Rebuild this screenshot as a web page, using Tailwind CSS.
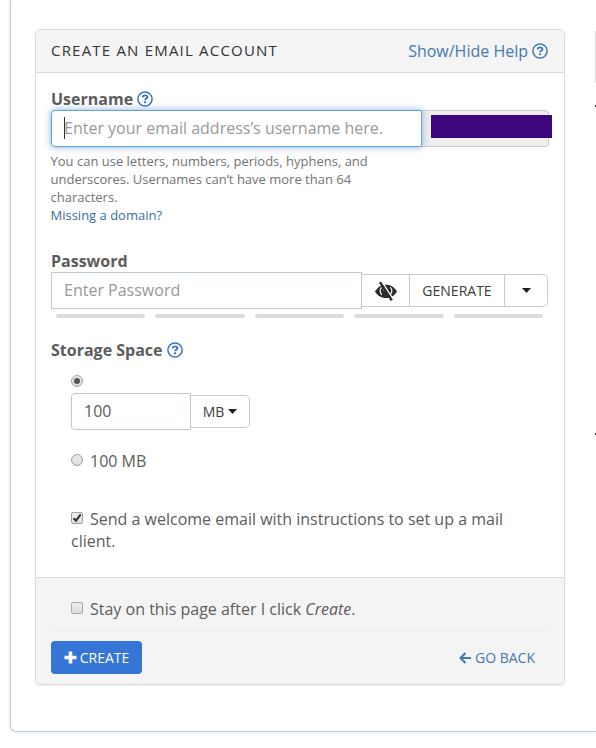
<!DOCTYPE html>
<html lang="en">
<head>
<meta charset="utf-8">
<title>Create an Email Account</title>
<script src="https://cdn.jsdelivr.net/npm/@tailwindcss/browser@4"></script>
</head>
<body class="relative h-[748px] overflow-hidden bg-white font-['Open_Sans',sans-serif] text-[16px] leading-[22px] text-[#5c5c5c]">
<svg class="hidden">
  <symbol id="help" viewBox="0 0 16 16"><circle cx="8" cy="8" r="7.1" fill="none" stroke="currentColor" stroke-width="1.5"/><path d="M5.600 6.300C5.800 4.900 6.800 4.400 8 4.400c1.300 0 2.400.7 2.400 1.900 0 1.500-2.300 1.500-2.300 2.900" fill="none" stroke="currentColor" stroke-width="1.900"/><rect x="7.100" y="10.300" width="2" height="1.900" fill="currentColor"/></symbol>
</svg>
<main class="ml-[10px] h-[732px] rounded-bl-[6px] border border-t-0 border-r-0 border-[#bcc8d6] pt-[29px] pl-[24px] shadow-[0_0_5px_#dfeaf5]">
  <section class="w-[530px] h-[656px] flex flex-col overflow-hidden rounded-[4px] border border-[#dadada] shadow-[0_1px_1px_rgba(0,0,0,.05)]">
    <header class="flex h-[43px] shrink-0 items-center justify-between border-b border-[#dadada] bg-[#f4f4f4] px-[15px]">
      <h1 class="whitespace-nowrap pb-[2px] text-[15px] tracking-[1.2px] text-[#333]">CREATE AN EMAIL ACCOUNT</h1>
      <a class="flex items-center gap-[4px] whitespace-nowrap text-[#4479b3]">Show/Hide Help <svg class="mr-[1px] size-4"><use href="#help"/></svg></a>
    </header>
    <div class="h-[504px] shrink-0 px-[15px] pt-[15px]">
      <label class="flex h-[22px] items-center gap-[4px] font-bold">Username <svg class="size-4 text-[#3b6fc9]"><use href="#help"/></svg></label>
      <div class="relative flex h-[37px] w-[498px]">
        <div class="relative z-10 flex w-[371px] shrink-0 items-center rounded-l-[4px] border border-[#66a3d8] bg-white pl-[12px] text-[#999] shadow-[0_0_7px_rgba(70,130,200,.65)]"><span class="mt-[-1px] h-[22px] w-px bg-[#333]"></span><span class="mt-[-2px] ml-[-1px] whitespace-nowrap">Enter your email address’s username here.</span></div>
        <div class="flex-1 rounded-r-[4px] border border-l-0 border-[#ccc] bg-[#eee]"></div>
        <div class="absolute top-[5px] left-[380px] z-20 h-[23px] w-[121px] bg-[#3d067c]"></div>
      </div>
      <p class="mt-[5px] ml-[-0.5px] text-[13px] leading-[18px] whitespace-nowrap text-[#737373]">You can use letters, numbers, periods, hyphens, and<br>underscores. Usernames can’t have more than 64<br>characters.<br><a class="text-[#3a6ea5]">Missing a domain?</a></p>
      <label class="mt-[26px] block h-[22px] font-bold">Password</label>
      <div class="flex h-[37px] items-center">
        <div class="flex h-[37px] w-[311px] items-center border border-[#bcc8d6] pl-[12px] text-[#999]"><span class="mt-[-2px]">Enter Password</span></div>
        <div class="flex h-[33px] w-[186px] rounded-r-[5px] border border-l-0 border-[#c8ccd0] text-[14px] text-[#3c3c3c]">
          <div class="flex w-[48px] items-center justify-center border-r border-[#c8ccd0]">
            <svg class="h-5 w-6" viewBox="0 0 24 20"><path d="M1 10.500C3.500 6.300 7.200 3.700 12 3.700s8.500 2.600 11 6.800C20.500 14.700 16.800 17 12 17S3.500 14.700 1 10.500z" fill="#2b2b2b"/><path d="M7.600 6.300a5.200 5.200 0 0 0 .2 7.400M16.400 6.300a5.200 5.200 0 0 1-.2 7.400" fill="none" stroke="#fff" stroke-width="1.200"/><path d="M9.800 9.500c0-1.400.9-2.200 2.200-2.200" fill="none" stroke="#fff" stroke-width="1"/><path d="M7.900 0.800 19.300 18.500" stroke="#fff" stroke-width="1.500"/><path d="M6 1.200 17.800 19.400" stroke="#2b2b2b" stroke-width="2.400"/></svg>
          </div>
          <div class="flex w-[95px] items-center justify-center border-r border-[#c8ccd0]">GENERATE</div>
          <div class="flex flex-1 items-center justify-center"><svg class="h-[5px] w-[9px]" viewBox="0 0 9 5"><path d="M0 0h9L4.500 5z" fill="#222"/></svg></div>
        </div>
      </div>
      <div class="mt-[5px] grid w-[497px] grid-cols-5 gap-[10px] px-[5px]">
        <i class="h-1 rounded-full bg-[#dcdcdc]"></i><i class="h-1 rounded-full bg-[#dcdcdc]"></i><i class="h-1 rounded-full bg-[#dcdcdc]"></i><i class="h-1 rounded-full bg-[#dcdcdc]"></i><i class="h-1 rounded-full bg-[#dcdcdc]"></i>
      </div>
      <label class="mt-[21px] flex h-[22px] items-center gap-[4px] font-bold">Storage Space <svg class="size-4 text-[#3b6fc9]"><use href="#help"/></svg></label>
      <div class="pl-[20px]">
        <div class="mt-[14px] flex size-3 items-center justify-center rounded-full border border-[#a0a0a0] bg-linear-to-b from-[#e8e8e8] to-[#ddd]"><i class="size-[6px] rounded-full bg-[#555]"></i></div>
        <div class="mt-[6px] flex h-[37px] items-center">
          <div class="flex h-[37px] w-[120px] items-center rounded-l-[4px] border border-[#bcc8d6] pl-[12px]"><span class="mt-[-1px]">100</span></div>
          <div class="flex h-[33px] w-[59px] items-center justify-center gap-[4px] rounded-r-[5px] border border-l-0 border-[#c8ccd0] text-[14px] text-[#3c3c3c]">MB <svg class="h-[5px] w-[9px]" viewBox="0 0 9 5"><path d="M0 0h9L4.500 5z" fill="#222"/></svg></div>
        </div>
        <div class="mt-[20px] flex h-[22px] items-center gap-[7px]"><i class="mt-[-2px] size-3 rounded-full border border-[#a0a0a0] bg-linear-to-b from-[#e8e8e8] to-[#ddd]"></i>100 MB</div>
        <div class="mt-[36px] whitespace-nowrap"><div class="flex items-center gap-[7px]"><i class="mt-[-2px] block size-3 rounded-[2px] border border-[#a0a0a0] bg-linear-to-b from-[#eee] to-[#ddd]"><svg class="size-[10px]" viewBox="0 0 10 10"><path d="M1.500 5.200 4 7.700 8.700 1.400" fill="none" stroke="#333" stroke-width="2.100"/></svg></i>Send a welcome email with instructions to set up a mail</div>client.</div>
      </div>
    </div>
    <footer class="flex-1 border-t border-[#dadada] bg-[#f4f4f4] px-[15px] pt-[20px]">
      <div class="flex h-[33px] items-start gap-[7px] border-b border-[#eaeaea] pl-[20px]"><i class="mt-[4px] size-3 rounded-[2px] border border-[#a8a8a8] bg-linear-to-b from-[#eee] to-[#ddd]"></i><span>Stay on this page after I click <em>Create</em>.</span></div>
      <div class="mt-[10px] flex items-center justify-between pr-[14px] text-[14px]">
        <button class="flex h-[33px] w-[91px] items-center justify-center gap-[3px] rounded-[4px] bg-[#3575d6] text-white"><svg class="size-[13px]" viewBox="0 0 13 13"><path d="M6.500.5v12M.5 6.500h12" stroke="#fff" stroke-width="3.600"/></svg>CREATE</button>
        <a class="flex items-center gap-[4px] text-[#4479b3]"><svg class="size-3" viewBox="0 0 12 12"><path d="M12 6H1.500M6.500 1 1.500 6l5 5" fill="none" stroke="currentColor" stroke-width="2.100"/></svg>GO BACK</a>
      </div>
    </footer>
  </section>
</main>
<div class="absolute top-[31px] left-[595px] h-[52px] w-px bg-[#dadada]"></div>
<div class="absolute top-[105px] left-[595px] h-[2px] w-px bg-[#333]"></div>
<div class="absolute top-[433px] left-[595px] h-[2px] w-px bg-[#333]"></div>
</body>
</html>
